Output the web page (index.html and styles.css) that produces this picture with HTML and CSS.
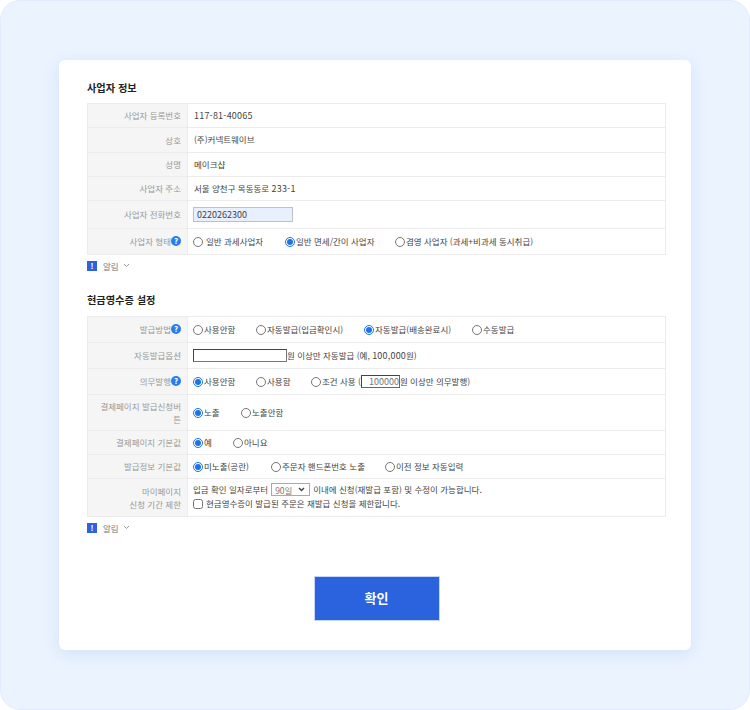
FILE: index.html
```html
<!DOCTYPE html>
<html lang="ko">
<head>
    <meta charset="UTF-8">
    <title>현금영수증 설정</title>
    <link rel="stylesheet" href="styles.css">
</head>
<body>
    <div class="frame">
        <div class="card">
            <!-- 사업자 정보 -->
            <h2 class="section-title">사업자 정보</h2>
            <table class="form-table">
                <tr class="h24"><th>사업자 등록번호</th><td class="plain"><span class="num">117-81-40065</span></td></tr>
                <tr class="h25"><th>상호</th><td class="plain">(주)커넥트웨이브</td></tr>
                <tr class="h24"><th>성명</th><td class="plain">메이크샵</td></tr>
                <tr class="h24"><th>사업자 주소</th><td class="plain">서울 양천구 목동동로 <span class="num">233-1</span></td></tr>
                <tr class="h28"><th>사업자 전화번호</th><td><input class="phone" type="text" value="0220262300"></td></tr>
                <tr class="h26">
                    <th>사업자 형태<span class="help">?</span></th>
                    <td>
                        <div class="opts">
                            <label class="opt w92 spaced"><input type="radio" name="biz">일반 과세사업자</label>
                            <label class="opt w110"><input type="radio" name="biz" checked>일반 면세/간이 사업자</label>
                            <label class="opt"><input type="radio" name="biz">겸영 사업자 (과세+비과세 동시취급)</label>
                        </div>
                    </td>
                </tr>
            </table>
            <div class="notice"><span class="notice-icon">!</span>알림<svg class="chevron" width="7" height="5" viewBox="0 0 7 5"><path d="M1 1l2.500 2.500L6 1" fill="none" stroke="#999" stroke-width="1"/></svg></div>

            <!-- 현금영수증 설정 -->
            <h2 class="section-title second">현금영수증 설정</h2>
            <table class="form-table">
                <tr class="h26">
                    <th>발급방법<span class="help">?</span></th>
                    <td>
                        <div class="opts">
                            <label class="opt w63"><input type="radio" name="method">사용안함</label>
                            <label class="opt w108"><input type="radio" name="method">자동발급(입금확인시)</label>
                            <label class="opt w108"><input type="radio" name="method" checked>자동발급(배송완료시)</label>
                            <label class="opt"><input type="radio" name="method">수동발급</label>
                        </div>
                    </td>
                </tr>
                <tr class="h26">
                    <th>자동발급옵션</th>
                    <td><div class="opts"><input class="amount" type="text"><span>원 이상만 자동발급 (예, <span class="num">100,000</span>원)</span></div></td>
                </tr>
                <tr class="h26">
                    <th>의무발행<span class="help">?</span></th>
                    <td>
                        <div class="opts">
                            <label class="opt w63"><input type="radio" name="duty" checked>사용안함</label>
                            <label class="opt w55"><input type="radio" name="duty">사용함</label>
                            <label class="opt"><input type="radio" name="duty">조건 사용 (</label><input class="limit" type="text" value="100000"><span>원 이상만 의무발행)</span>
                        </div>
                    </td>
                </tr>
                <tr class="h36">
                    <th>결제페이지 발급신청버튼</th>
                    <td>
                        <div class="opts">
                            <label class="opt w48"><input type="radio" name="btn" checked>노출</label>
                            <label class="opt"><input type="radio" name="btn">노출안함</label>
                        </div>
                    </td>
                </tr>
                <tr class="h24">
                    <th>결제페이지 기본값</th>
                    <td>
                        <div class="opts">
                            <label class="opt w40"><input type="radio" name="def" checked>예</label>
                            <label class="opt"><input type="radio" name="def">아니요</label>
                        </div>
                    </td>
                </tr>
                <tr class="h24">
                    <th>발급정보 기본값</th>
                    <td>
                        <div class="opts">
                            <label class="opt w78"><input type="radio" name="info" checked>미노출(공란)</label>
                            <label class="opt w114"><input type="radio" name="info">주문자 핸드폰번호 노출</label>
                            <label class="opt"><input type="radio" name="info">이전 정보 자동입력</label>
                        </div>
                    </td>
                </tr>
                <tr class="h38">
                    <th>마이페이지<br>신청 기간 제한</th>
                    <td>
                        <div class="opts">입금 확인 일자로부터<select class="period"><option>90일</option></select>이내에 신청(재발급 포함) 및 수정이 가능합니다.</div>
                        <label class="opt check"><input type="checkbox">현금영수증이 발급된 주문은 재발급 신청을 제한합니다.</label>
                    </td>
                </tr>
            </table>
            <div class="notice"><span class="notice-icon">!</span>알림<svg class="chevron" width="7" height="5" viewBox="0 0 7 5"><path d="M1 1l2.500 2.500L6 1" fill="none" stroke="#999" stroke-width="1"/></svg></div>

            <div class="actions"><button class="confirm" type="button">확인</button></div>
        </div>
    </div>
</body>
</html>
```

FILE: styles.css
```css
* {
    box-sizing: border-box;
}

body {
    margin: 0;
    background: #ffffff;
    font-family: "Noto Sans CJK KR", "Liberation Sans", sans-serif;
    font-size: 8.5px;
    color: #444;
}

.frame {
    width: 750px;
    height: 710px;
    padding: 59px 58px;
    background: #ebf3fe;
    border: 1px solid #e0ecfd;
    border-radius: 20px;
}

.card {
    width: 632px;
    height: 590px;
    padding: 20px 25px 0 28px;
    background: #ffffff;
    border-radius: 6px;
    box-shadow: 0 4px 16px rgba(120, 170, 240, 0.22);
}

.section-title {
    margin: 0;
    height: 23px;
    font-size: 10.2px;
    line-height: 16px;
    font-weight: 700;
    color: #222;
}

.section-title.second {
    margin-top: 21px;
    height: 24px;
}

/* 표 */
.form-table {
    width: 579px;
    border-collapse: collapse;
    table-layout: fixed;
}

.form-table th,
.form-table td {
    border: 1px solid #ececec;
    padding: 0 6px 0 5px;
    line-height: 13px;
    vertical-align: middle;
}

.form-table th {
    width: 100px;
    background: #f5f5f5;
    color: #999;
    font-weight: 400;
    text-align: right;
}

.form-table td.plain {
    padding: 0 6px 1px;
}

.h24 { height: 24px; }
.h25 { height: 25px; }
.h26 { height: 26px; }
.h28 { height: 28px; }
.h36 { height: 36px; }
.h38 { height: 38px; }

.num {
    font-size: 9px;
    letter-spacing: 0.2px;
}

.help {
    display: inline-block;
    width: 10px;
    height: 10px;
    border-radius: 50%;
    background: #2b7de9;
    color: #fff;
    font-size: 8px;
    font-weight: 700;
    line-height: 10px;
    text-align: center;
    vertical-align: 1px;
}

/* 라디오 */
.opts {
    display: flex;
    align-items: center;
    white-space: nowrap;
}

.opt {
    display: inline-flex;
    align-items: center;
}

.opt input {
    width: 10px;
    height: 10px;
    margin: 0 1px 0 0;
    accent-color: #1a73e8;
}

.spaced input {
    margin-right: 3px;
}

.w92 { width: 92px; }
.w110 { width: 110px; }
.w63 { width: 63px; }
.w108 { width: 108px; }
.w55 { width: 55px; }
.w48 { width: 48px; }
.w40 { width: 40px; }
.w78 { width: 78px; }
.w114 { width: 114px; }

.phone {
    display: block;
    width: 100px;
    height: 15px;
    padding: 0 3px;
    border: 1px solid #b9c1cf;
    background: #e8f0fe;
    font: inherit;
    font-size: 9px;
    color: #444;
}

.amount {
    width: 94px;
    height: 13px;
    padding: 0;
    border: 1px solid #777;
    border-top-color: #444;
    border-left-color: #444;
}

.limit {
    width: 39px;
    height: 13px;
    padding: 0;
    border: 1px solid #666;
    border-top-color: #444;
    border-left-color: #444;
    font: inherit;
    font-size: 9px;
    color: #777;
    text-align: right;
}

.period {
    width: 39px;
    height: 13px;
    margin: 0 3px;
    padding: 0 0 0 3px;
    border: 1px solid #aaa;
    border-radius: 0;
    background: #fff url("data:image/svg+xml,%3Csvg xmlns='http://www.w3.org/2000/svg' width='7' height='5'%3E%3Cpath d='M1 1l2.500 2.500L6 1' fill='none' stroke='%23444' stroke-width='1.500'/%3E%3C/svg%3E") no-repeat right 4px center;
    appearance: none;
    font: inherit;
    color: #777;
}

.check {
    margin-top: 1px;
}

.check input {
    margin-right: 3px;
}

/* 알림 */
.notice {
    display: flex;
    align-items: center;
    height: 11px;
    margin-top: 5px;
    color: #777;
}

.notice-icon {
    width: 10px;
    height: 10px;
    margin-right: 6px;
    background: #2b63de;
    color: #fff;
    font-size: 8px;
    font-weight: 700;
    line-height: 10px;
    text-align: center;
}

.chevron {
    margin-left: 4px;
}

/* 버튼 */
.actions {
    display: flex;
    justify-content: center;
    margin-top: 43px;
}

.confirm {
    width: 126px;
    height: 45px;
    padding: 0 0 2px;
    border: 1px solid #c5d6f8;
    background: #2b63de;
    color: #fff;
    font: inherit;
    font-size: 13px;
    font-weight: 700;
}
```
